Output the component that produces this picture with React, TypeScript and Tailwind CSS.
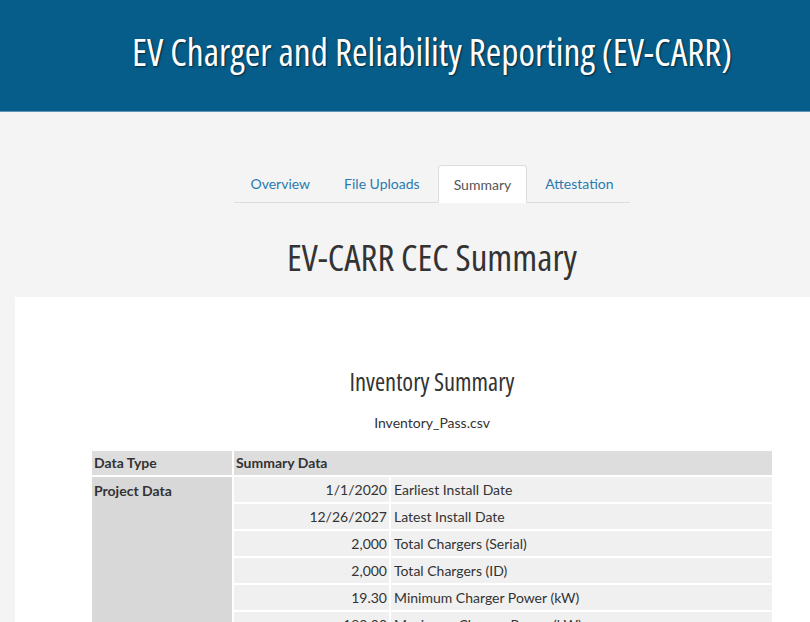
import React from "react";

const rows: [string, string][] = [
  ["1/1/2020", "Earliest Install Date"],
  ["12/26/2027", "Latest Install Date"],
  ["2,000", "Total Chargers (Serial)"],
  ["2,000", "Total Chargers (ID)"],
  ["19.30", "Minimum Charger Power (kW)"],
  ["180.00", "Maximum Charger Power (kW)"],
  ["2,000", "Total Ports"],
];

const headFont = "[font-family:'Open_Sans',sans-serif] [font-stretch:75%] whitespace-nowrap";

export default function App() {
  return (
    <div className="w-full min-h-[622px] overflow-hidden bg-[#f4f4f4] [font-family:Lato,'Noto_Sans',sans-serif]">
      <div className="w-[864px]">
        <header className="h-[112px] bg-[#075d8a] border-b border-[#5f93b3] flex items-center pl-[132px]">
          <h1 className={`${headFont} text-[37.5px] text-white [text-shadow:1px_1px_2px_rgba(0,0,0,0.6)] leading-none -mt-[7px]`}>
            EV Charger and Reliability Reporting (EV-CARR)
          </h1>
        </header>
        <nav className="flex justify-center pt-[53px]">
          <ul className="flex border-b border-[#dddddd] text-[14px] whitespace-nowrap">
            <li className="mr-[2px] px-[15px] h-[37px] flex items-center border border-transparent text-[#2a7ab0]">Overview</li>
            <li className="mr-[2px] px-[15px] h-[37px] flex items-center border border-transparent text-[#2a7ab0]">File Uploads</li>
            <li className="mr-[2px] px-[15px] h-[38px] -mb-px flex items-center text-[#555555] bg-white border border-[#dddddd] border-b-white rounded-t-[4px]">Summary</li>
            <li className="px-[15px] h-[37px] flex items-center border border-transparent text-[#2a7ab0]">Attestation</li>
          </ul>
        </nav>
        <h2 className={`${headFont} text-center text-[37px] text-[#333333] leading-none mt-[35px]`}>EV-CARR CEC Summary</h2>
        <main className="mx-[15px] mt-[22px] bg-white pt-[73px] pb-10">
          <h3 className={`${headFont} text-center text-[24.5px] text-[#333333] leading-none`}>Inventory Summary</h3>
          <p className="text-center text-[14px] leading-[22px] text-[#333333] mt-[17px]">Inventory_Pass.csv</p>
          <table className="mx-auto mt-[15px] w-[684px] border-separate border-spacing-[2px] text-[14px] text-[#333333]">
            <thead>
              <tr>
                <th className="w-[140px] bg-[#dddddd] text-left font-bold px-[2px] h-[24px]">Data Type</th>
                <th colSpan={2} className="bg-[#dddddd] text-left font-bold px-[2px] h-[24px]">Summary Data</th>
              </tr>
            </thead>
            <tbody>
              {rows.map((r, i) => (
                <tr key={i}>
                  {i === 0 && (
                    <td rowSpan={rows.length} className="bg-[#d8d8d8] align-top font-bold px-[2px] pt-[3px]">Project Data</td>
                  )}
                  <td className="w-[155px] bg-[#f0f0f0] text-right px-[2px] h-[25px]">{r[0]}</td>
                  <td className="bg-[#f0f0f0] text-left px-[3px] h-[25px]">{r[1]}</td>
                </tr>
              ))}
            </tbody>
          </table>
        </main>
      </div>
    </div>
  );
}
